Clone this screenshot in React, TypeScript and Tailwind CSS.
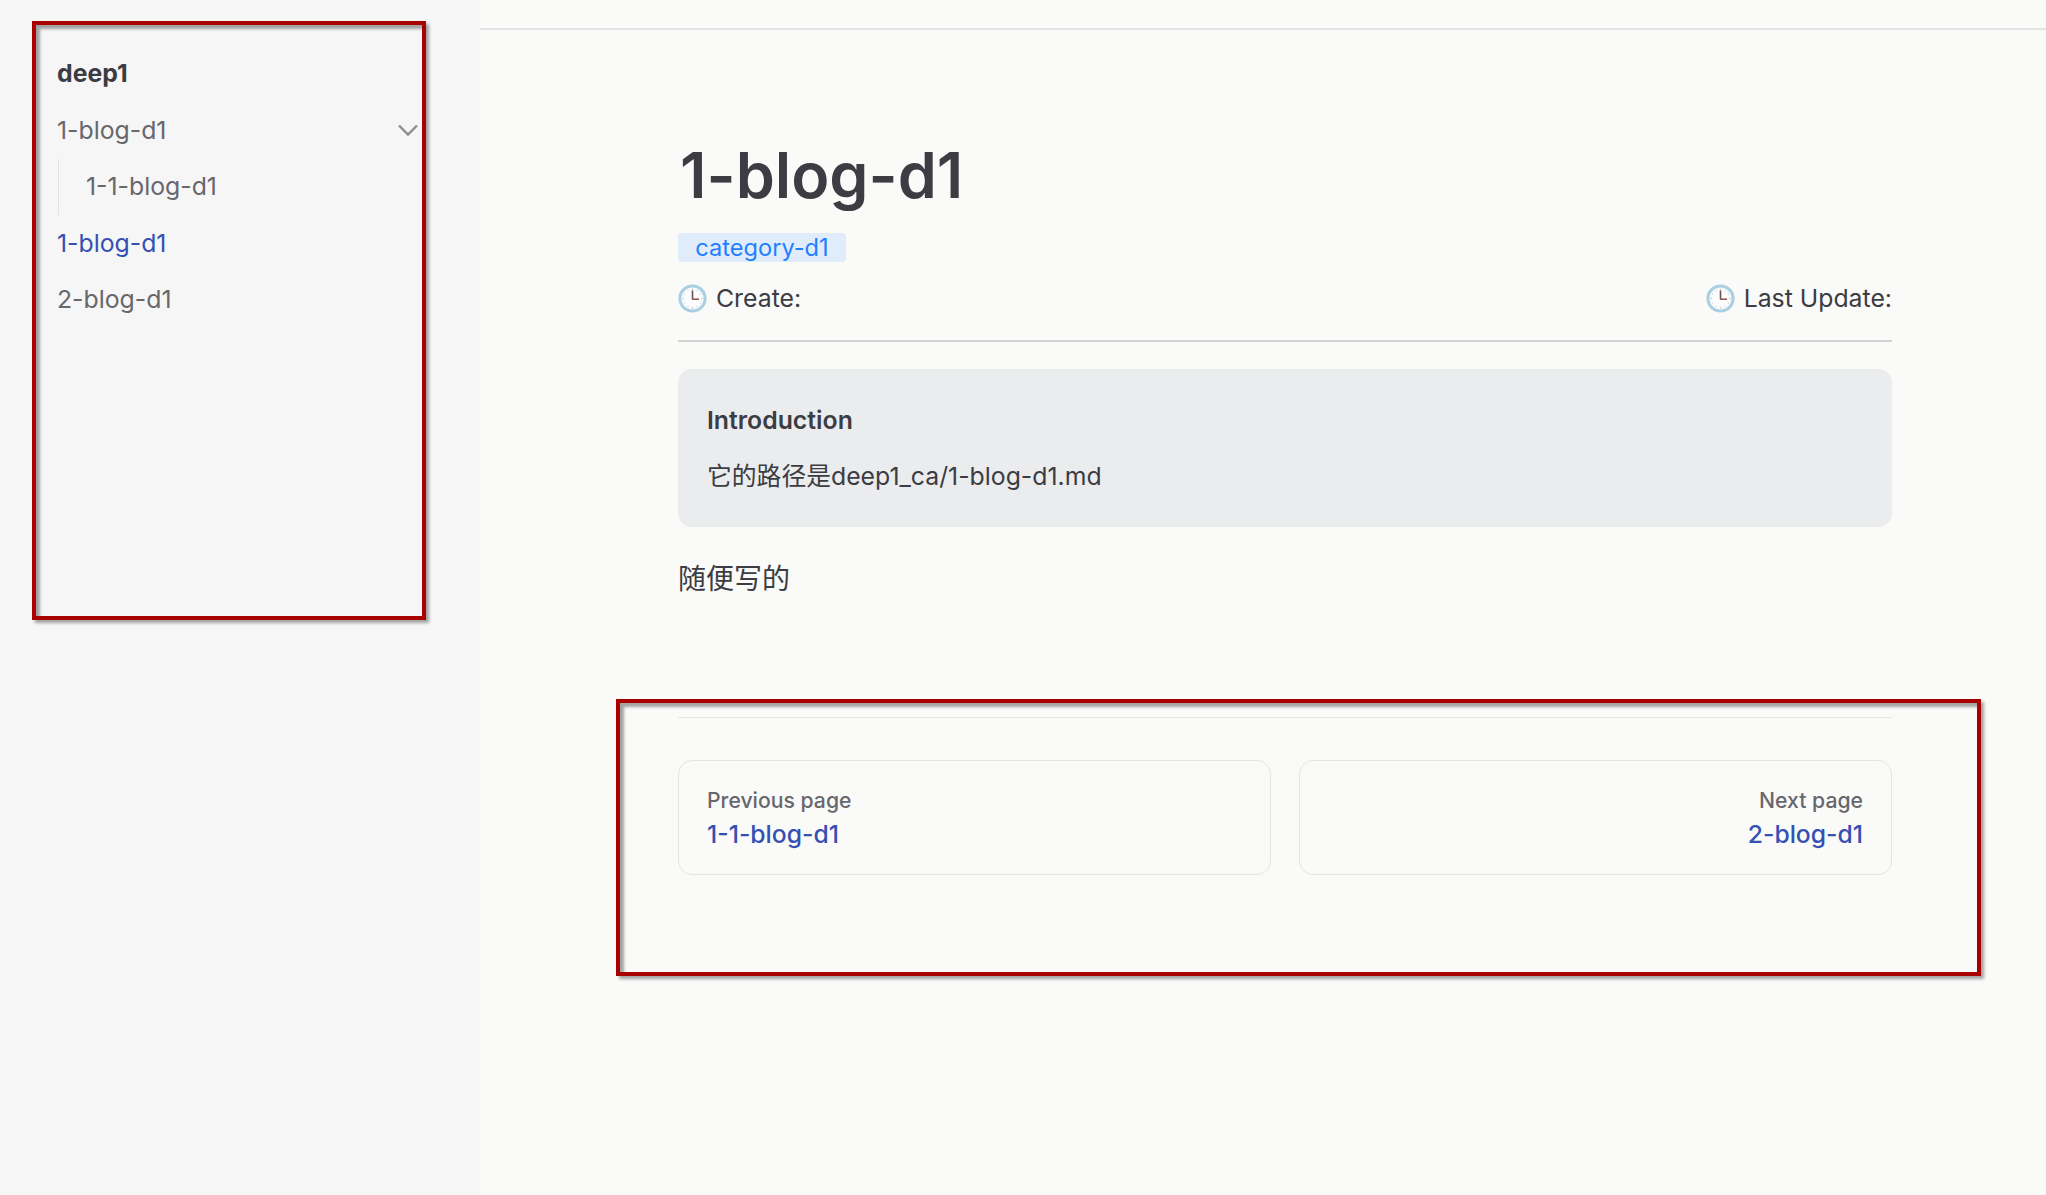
import React from "react";

const FONT = "font-['Inter','Noto_Sans_CJK_SC',sans-serif]";

function Clock() {
  return (
    <svg width="29" height="29" viewBox="0 0 29 29" className="shrink-0">
      <defs>
        <radialGradient id="clockFace" cx="50%" cy="50%" r="50%">
          <stop offset="0%" stopColor="#ffffff" />
          <stop offset="82%" stopColor="#f8fbfc" />
          <stop offset="100%" stopColor="#dcebf2" />
        </radialGradient>
      </defs>
      <circle cx="14.5" cy="14.5" r="12.6" fill="url(#clockFace)" stroke="#aacfe0" strokeWidth="3" />
      <g fill="#bdbdbd">
        <circle cx="14.5" cy="5.2" r="0.7" />
        <circle cx="14.5" cy="23.8" r="0.7" />
        <circle cx="5.2" cy="14.5" r="0.7" />
        <circle cx="23.8" cy="14.5" r="0.7" />
        <circle cx="10" cy="6.5" r="0.5" />
        <circle cx="19" cy="6.5" r="0.5" />
        <circle cx="10" cy="22.5" r="0.5" />
        <circle cx="19" cy="22.5" r="0.5" />
        <circle cx="6.5" cy="10" r="0.5" />
        <circle cx="22.5" cy="10" r="0.5" />
        <circle cx="6.5" cy="19" r="0.5" />
        <circle cx="22.5" cy="19" r="0.5" />
      </g>
      <path d="M14.5 6.5V15.2" fill="none" stroke="#6f5150" strokeWidth="1.6" />
      <path d="M14 15.2H21" fill="none" stroke="#8f5a55" strokeWidth="1.6" />
    </svg>
  );
}

function SideItem({ children, active, indent }: { children: React.ReactNode; active?: boolean; indent?: boolean }) {
  return (
    <div className={`flex h-[56.5px] items-center text-[24.8px] ${active ? "text-[#3451b2]" : "text-[#67676c]"} ${indent ? "ml-px border-l border-[#e2e2e3] pl-[27px]" : ""}`}>
      {children}
    </div>
  );
}

function PageCard({ label, title, right }: { label: string; title: string; right?: boolean }) {
  return (
    <div className={`flex h-[115px] flex-1 flex-col justify-center rounded-[14px] border border-[#e4e4e4] px-[28px] pb-[2px] ${right ? "items-end" : "items-start"}`}>
      <div className="text-[21.2px] leading-[34px] font-medium text-[#67676c]">{label}</div>
      <div className="text-[24.7px] leading-[34px] font-medium text-[#3451b2]">{title}</div>
    </div>
  );
}

const BOX =
  "pointer-events-none absolute border-[4px] border-[#a90000] shadow-[3px_3px_3px_rgba(0,0,0,0.35),inset_4px_4px_3px_rgba(0,0,0,0.35)]";

export default function App() {
  return (
    <div className={`relative flex h-[1195px] w-[2046px] overflow-hidden bg-[#fafaf9] text-[#3c3c43] ${FONT}`}>
      <aside className="w-[480px] shrink-0 bg-[#f6f6f7] pt-[46px] pl-[57px]">
        <div className="flex h-[56px] items-center text-[24.8px] font-bold text-[#3c3c43]">deep1</div>
        <div className="relative">
          <SideItem>1-blog-d1</SideItem>
          <svg width="24" height="14" viewBox="0 0 24 14" className="absolute top-[21px] ml-[339px]">
            <path d="M3 2.5L12 11.5L21 2.5" fill="none" stroke="#8d8d92" strokeWidth="2.4" />
          </svg>
        </div>
        <SideItem indent>1-1-blog-d1</SideItem>
        <SideItem active>1-blog-d1</SideItem>
        <SideItem>2-blog-d1</SideItem>
      </aside>

      <main className="flex-1">
        <div className="h-[30px] border-b-2 border-[#e4e4e4]" />
        <div className="ml-[198px] w-[1214px] pt-[104px]">
          <h1 className="ml-[2px] h-[83px] text-[62.7px] leading-[83px] font-semibold text-[#3c3c43]">1-blog-d1</h1>
          <div className="mt-[16px] flex">
            <span className="flex h-[29px] w-[168px] items-center justify-center rounded-[4px] bg-[#e0ecf9] text-[23.6px] text-[#1f80ff]">category-d1</span>
          </div>
          <div className="mt-[22px] flex h-[29px] items-center justify-between text-[24.8px] text-[#3c3c43]">
            <div className="flex items-center gap-[9px]"><Clock />Create:</div>
            <div className="flex items-center gap-[9px]"><Clock />Last Update:</div>
          </div>
          <div className="mt-[27px] border-b-2 border-[#d2d2d2]" />
          <div className="mt-[27px] h-[158px] rounded-[14px] bg-[#ebecee] px-[29px] pt-[24px]">
            <div className="h-[55px] text-[24.8px] leading-[55px] font-semibold">Introduction</div>
            <div className="text-[24.8px] leading-[56px]">它的路径是deep1_ca/1-blog-d1.md</div>
          </div>
          <p className="mt-[30px] text-[28px] leading-[44px]">随便写的</p>
          <div className="mt-[116px] border-t border-[#e6e6e6]" />
          <div className="mt-[42px] flex gap-[28px]">
            <PageCard label="Previous page" title="1-1-blog-d1" />
            <PageCard label="Next page" title="2-blog-d1" right />
          </div>
        </div>
      </main>

      <div className={`${BOX} top-[21px] left-[32px] h-[599px] w-[394px]`} />
      <div className={`${BOX} top-[699px] left-[616px] h-[277px] w-[1365px]`} />
    </div>
  );
}
